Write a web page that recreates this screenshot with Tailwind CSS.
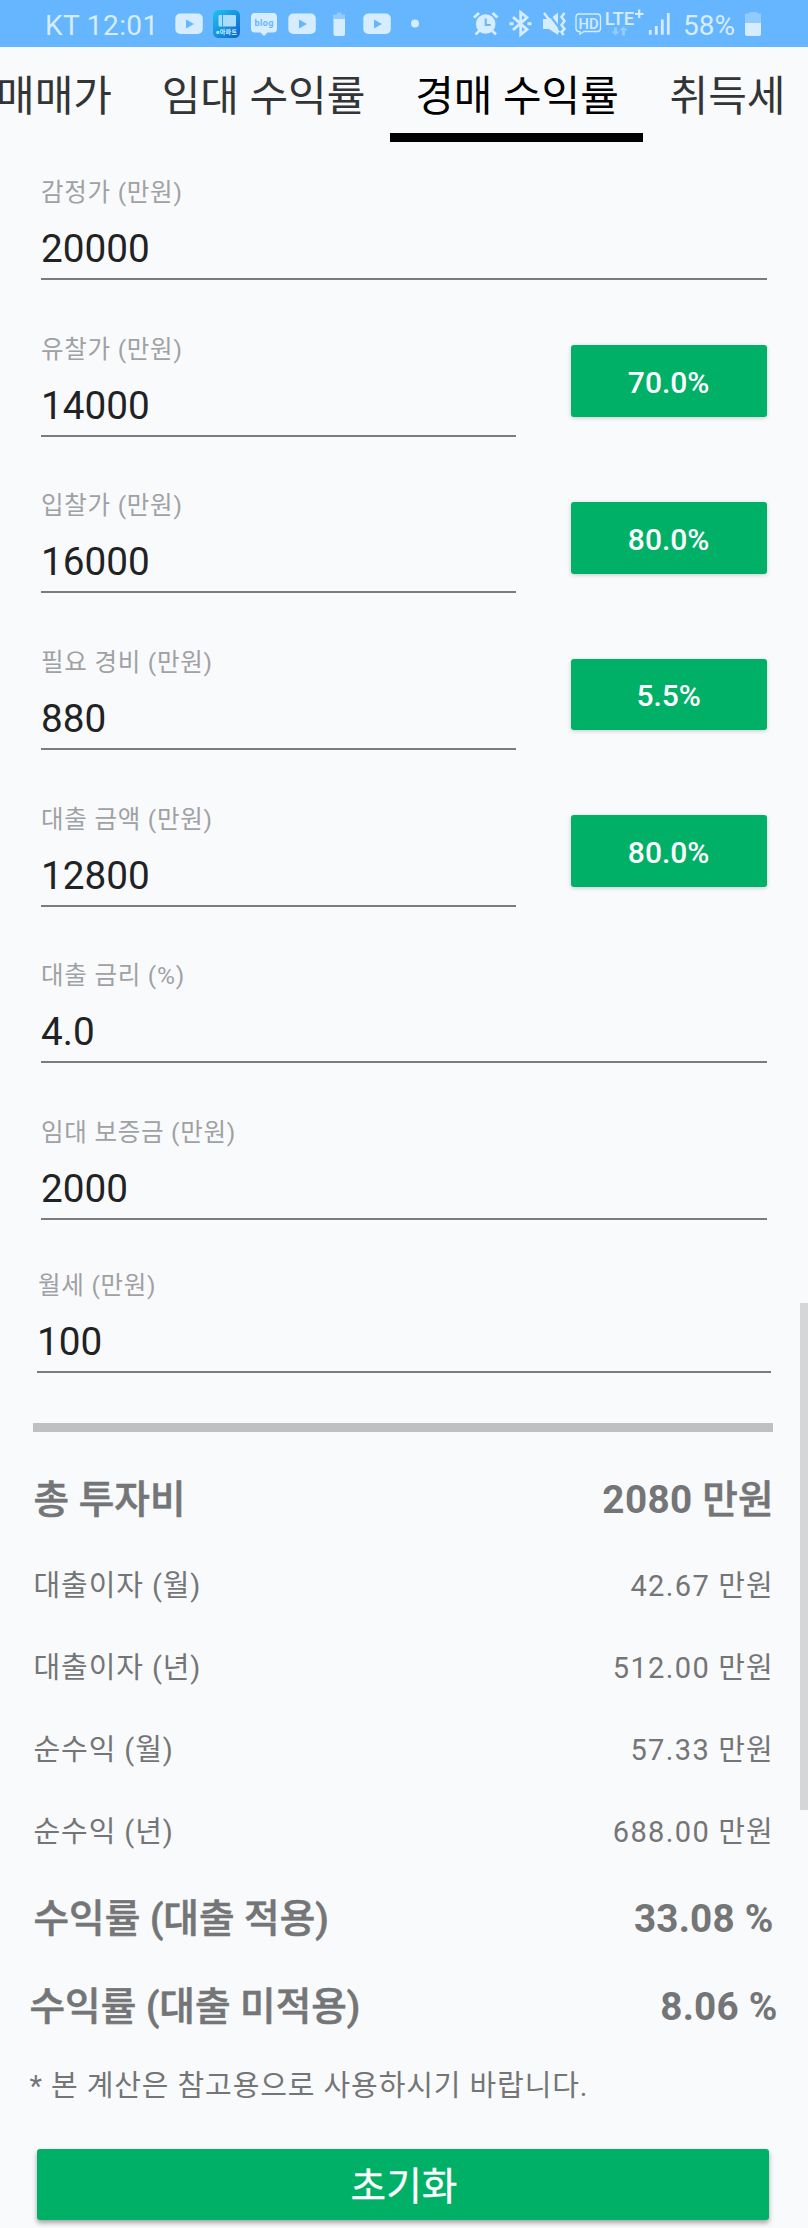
<!DOCTYPE html>
<html lang="ko">
<head>
<meta charset="utf-8">
<title>경매 수익률</title>
<script src="https://cdn.jsdelivr.net/npm/@tailwindcss/browser@4"></script>
</head>
<body class="w-[808px] h-[2228px] overflow-hidden bg-[#f9fafc] font-['Roboto','Noto_Sans_CJK_KR',sans-serif] whitespace-nowrap">
<div class="relative w-[808px] h-[2228px] overflow-hidden">

<!-- status bar -->
<header class="h-[47px] bg-[#66b6ff] flex text-[#d6ecff] text-[28px] leading-[51px]">
  <div class="w-[175px] pl-[45px] shrink-0 tracking-[0.400px]">KT 12:01</div>
  <svg class="w-[28px] h-[47px] shrink-0" viewBox="175 0 28 47"><rect x="175.300" y="13.500" width="27.500" height="20.500" rx="5" fill="#d6ecff"/><path d="M186 19.500L194 24L186 28.500Z" fill="#66b6ff"/></svg>
  <svg class="ml-[10px] w-[27px] h-[47px] shrink-0" viewBox="213 0 27 47"><defs><linearGradient id="g" x1="0" y1="0" x2="1" y2="1"><stop offset="0" stop-color="#22c3f0"/><stop offset="1" stop-color="#0a62d0"/></linearGradient></defs><rect x="213" y="10" width="27" height="28" rx="5.500" fill="url(#g)"/><rect x="218.500" y="15" width="17.500" height="11.500" rx="1" fill="#a9ddfa"/><path d="M222.500 15v11.500" stroke="#2ba4e8"/><text x="216" y="33.500" font-size="6" font-weight="700" fill="#d8f2ff" textLength="21">e아파트</text></svg>
  <svg class="ml-[11px] w-[27px] h-[47px] shrink-0" viewBox="251 0 27 47"><path d="M255 13h18a4 4 0 0 1 4 4v11.500a4 4 0 0 1-4 4h-5.500l-3.500 3.500l-3.500-3.500H255a4 4 0 0 1-4-4V17a4 4 0 0 1 4-4Z" fill="#d6ecff"/><text x="254.500" y="26" font-size="9" font-weight="700" fill="#66b6ff" textLength="19">blog</text></svg>
  <svg class="ml-[10px] w-[28px] h-[47px] shrink-0" viewBox="175 0 28 47"><rect x="175.300" y="13.500" width="27.500" height="20.500" rx="5" fill="#d6ecff"/><path d="M186 19.500L194 24L186 28.500Z" fill="#66b6ff"/></svg>
  <svg class="ml-[17px] w-[13px] h-[47px] shrink-0" viewBox="333 0 13 47"><path d="M337 12.500h4.500v2h3.500v5h-12v-5h4Z" fill="#92cbff"/><path d="M333.500 19h11.500v15q0 2-2 2h-7.500q-2 0-2-2Z" fill="#d6ecff"/></svg>
  <svg class="ml-[17px] w-[28px] h-[47px] shrink-0" viewBox="175 0 28 47"><rect x="175.300" y="13.500" width="27.500" height="20.500" rx="5" fill="#d6ecff"/><path d="M186 19.500L194 24L186 28.500Z" fill="#66b6ff"/></svg>
  <svg class="ml-[19px] w-[10px] h-[47px] shrink-0" viewBox="409 0 10 47"><circle cx="414" cy="23.500" r="4" fill="#d6ecff"/></svg>

  <!-- alarm -->
  <svg class="ml-[52px] w-[27px] h-[47px] shrink-0" viewBox="471 0 27 47" fill="none" stroke="#d6ecff"><circle cx="484.700" cy="24" r="9.800" fill="#d6ecff" stroke="none"/><path d="M484.700 18.500V25h5" stroke="#66b6ff" stroke-width="2"/><path d="M473 17.500L478 13M496.500 17.500L491.500 13" stroke-width="3"/><path d="M478.500 30.500L474.500 34.500M491 30.500L495 34.500" stroke-width="2.500"/></svg>
  <!-- bluetooth -->
  <svg class="ml-[10px] w-[24px] h-[47px] shrink-0" viewBox="508 0 24 47" fill="none" stroke="#d6ecff" stroke-width="2.800"><path d="M512 17L526 29.500L519.700 34.500V12.500L526 17.500L512 30"/><path d="M508.500 23.700h4M526.500 23.700h4" stroke-width="3"/></svg>
  <!-- muted with vibration -->
  <svg class="ml-[9px] w-[25px] h-[47px] shrink-0" viewBox="541 0 25 47"><path d="M542 19h6l1.500-1L557 28v7L548 29H542Z" fill="#d6ecff"/><path d="M557 12.500v12L551.500 17Z" fill="#d6ecff"/><path d="M543 13L558 32.500" stroke="#d6ecff" stroke-width="2.500"/><path d="M563.500 13l-3 4l3 4l-3 4l3 4l-3 3l2 3" stroke="#d6ecff" stroke-width="2.500" fill="none"/></svg>
  <!-- HD voice -->
  <svg class="ml-[8px] w-[27px] h-[47px] shrink-0" viewBox="574 0 27 47"><path d="M578 14h18.500q3 0 3 3v11.500q0 3-3 3H583l-4 2.500v-2.500h-1q-3 0-3-3V17q0-3 3-3Z" fill="none" stroke="#d6ecff" stroke-width="1.300"/><text x="577.500" y="28.500" font-size="15.500" font-weight="500" fill="#d6ecff" textLength="20" lengthAdjust="spacingAndGlyphs">HD</text></svg>
  <!-- LTE+ -->
  <svg class="ml-[2px] w-[41px] h-[47px] shrink-0" viewBox="603 0 41 47"><g fill="none" stroke="#d6ecff" stroke-width="2.200"><path d="M634 14h8.500M638.200 9.500v8.500"/></g><text x="603.800" y="25" font-size="17.500" font-weight="500" fill="#d6ecff" textLength="29.500" lengthAdjust="spacingAndGlyphs">LTE</text><path d="M613 27.500h3v4h2.500l-4 4l-4-4h2.500ZM621 35.500h3v-5h2.500l-4-4l-4 4h2.500Z" fill="#94ccff"/></svg>
  <!-- signal -->
  <svg class="ml-[3px] w-[24px] h-[47px] shrink-0" viewBox="647 0 24 47" stroke="#d6ecff" stroke-width="2.800"><path d="M649.300 30v4.700M655.300 26v8.700M661.300 19.500v15.200M667.300 13v21.700"/></svg>
  <div class="ml-[11px] w-[54px] shrink-0">58%</div>
  <svg class="ml-[8px] w-[17px] h-[47px] shrink-0" viewBox="744 0 17 47"><path d="M748.500 12h7.500v1.500h4V23h-16v-9.500h4.500Z" fill="#92cbff"/><path d="M744 23h16v11q0 2-2 2h-12q-2 0-2-2Z" fill="#d6ecff"/></svg>
</header>

<!-- tabs -->
<nav class="h-[95px] flex text-[42px] leading-[100px] text-[#333436]">
  <div class="w-[137px] shrink-0"><span class="-ml-[4px]">매매가</span></div>
  <div class="w-[253px] text-center shrink-0">임대 수익률</div>
  <div class="w-[253px] pl-[1px] text-center shrink-0 text-black border-b-[9px] border-black">경매 수익률</div>
  <div class="w-[165px] pl-[4px] text-center shrink-0">취득세</div>
</nav>

<main>
  <section class="px-[41px] text-[#212224]">
    <div class="h-[138px] flex flex-col justify-end border-b-2 border-[#7b7c7e]">
      <div class="h-[32px] leading-[32px] text-[24.500px] tracking-[0.750px] text-[#a0a1a3]">감정가 (만원)</div>
      <div class="mt-[17px] mb-[6px] h-[46px] leading-[46px] text-[38.700px]">20000</div>
    </div>
    <div class="h-[156.700px] flex justify-between">
      <div class="w-[475px] flex flex-col justify-end border-b-2 border-[#7b7c7e]">
        <div class="h-[32px] leading-[32px] text-[24.500px] tracking-[0.750px] text-[#a0a1a3]">유찰가 (만원)</div>
        <div class="mt-[17px] mb-[6px] h-[46px] leading-[46px] text-[38.700px]">14000</div>
      </div>
      <button class="mt-[65.200px] w-[195.700px] h-[71.700px] pt-[3px] pr-[1px] rounded-[3px] bg-[#00b067] text-white text-[30px] font-medium shadow-[0_1px_4px_rgba(0,0,0,0.200)]">70.0%</button>
    </div>
    <div class="h-[156.700px] flex justify-between">
      <div class="w-[475px] flex flex-col justify-end border-b-2 border-[#7b7c7e]">
        <div class="h-[32px] leading-[32px] text-[24.500px] tracking-[0.750px] text-[#a0a1a3]">입찰가 (만원)</div>
        <div class="mt-[17px] mb-[6px] h-[46px] leading-[46px] text-[38.700px]">16000</div>
      </div>
      <button class="mt-[65.200px] w-[195.700px] h-[71.700px] pt-[3px] pr-[1px] rounded-[3px] bg-[#00b067] text-white text-[30px] font-medium shadow-[0_1px_4px_rgba(0,0,0,0.200)]">80.0%</button>
    </div>
    <div class="h-[156.700px] flex justify-between">
      <div class="w-[475px] flex flex-col justify-end border-b-2 border-[#7b7c7e]">
        <div class="h-[32px] leading-[32px] text-[24.500px] tracking-[0.750px] text-[#a0a1a3]">필요 경비 (만원)</div>
        <div class="mt-[17px] mb-[6px] h-[46px] leading-[46px] text-[38.700px]">880</div>
      </div>
      <button class="mt-[65.200px] w-[195.700px] h-[71.700px] pt-[3px] pr-[1px] rounded-[3px] bg-[#00b067] text-white text-[30px] font-medium shadow-[0_1px_4px_rgba(0,0,0,0.200)]">5.5%</button>
    </div>
    <div class="h-[156.700px] flex justify-between">
      <div class="w-[475px] flex flex-col justify-end border-b-2 border-[#7b7c7e]">
        <div class="h-[32px] leading-[32px] text-[24.500px] tracking-[0.750px] text-[#a0a1a3]">대출 금액 (만원)</div>
        <div class="mt-[17px] mb-[6px] h-[46px] leading-[46px] text-[38.700px]">12800</div>
      </div>
      <button class="mt-[65.200px] w-[195.700px] h-[71.700px] pt-[3px] pr-[1px] rounded-[3px] bg-[#00b067] text-white text-[30px] font-medium shadow-[0_1px_4px_rgba(0,0,0,0.200)]">80.0%</button>
    </div>
    <div class="h-[156.700px] flex flex-col justify-end border-b-2 border-[#7b7c7e]">
      <div class="h-[32px] leading-[32px] text-[24.500px] tracking-[0.750px] text-[#a0a1a3]">대출 금리 (%)</div>
      <div class="mt-[17px] mb-[6px] h-[46px] leading-[46px] text-[38.700px]">4.0</div>
    </div>
    <div class="h-[156.700px] flex flex-col justify-end border-b-2 border-[#7b7c7e]">
      <div class="h-[32px] leading-[32px] text-[24.500px] tracking-[0.750px] text-[#a0a1a3]">임대 보증금 (만원)</div>
      <div class="mt-[17px] mb-[6px] h-[46px] leading-[46px] text-[38.700px]">2000</div>
    </div>
    <div class="-mx-[4px] h-[152.700px] flex flex-col justify-end border-b-2 border-[#7b7c7e]">
      <div class="h-[32px] leading-[32px] pl-[1px] text-[24.500px] tracking-[0.750px] text-[#a0a1a3]">월세 (만원)</div>
      <div class="mt-[17px] mb-[6px] h-[46px] leading-[46px] text-[38.700px]">100</div>
    </div>
  </section>

  <div class="ml-[33px] mr-[35px] mt-[50.400px] h-[8.700px] bg-[#bfc0c2]"></div>

  <section class="pl-[33.500px] pr-[34.500px] pt-[40px] text-[#747577]">
    <div class="h-[55px] leading-[55px] flex justify-between text-[38.700px]"><span class="font-medium [-webkit-text-stroke:0.600px]">총 투자비</span><span class="font-medium"><b class="font-bold tracking-[0.400px]">2080</b><span class="[-webkit-text-stroke:0.600px]"> 만원</span></span></div>
    <div class="mt-[19.400px] h-[81.800px] leading-[81.800px] flex justify-between text-[29px] tracking-[0.900px]"><span>대출이자 (월)</span><span><span class="tracking-[1.400px]">42.67</span> 만원</span></div>
    <div class="h-[81.800px] leading-[81.800px] flex justify-between text-[29px] tracking-[0.900px]"><span>대출이자 (년)</span><span><span class="tracking-[1.400px]">512.00</span> 만원</span></div>
    <div class="h-[81.800px] leading-[81.800px] flex justify-between text-[29px] tracking-[0.900px]"><span>순수익 (월)</span><span><span class="tracking-[1.400px]">57.33</span> 만원</span></div>
    <div class="h-[81.800px] leading-[81.800px] flex justify-between text-[29px] tracking-[0.900px]"><span>순수익 (년)</span><span><span class="tracking-[1.400px]">688.00</span> 만원</span></div>
    <div class="mt-[1.200px] h-[88.300px] leading-[88.300px] flex justify-between text-[38.700px]"><span class="font-medium [-webkit-text-stroke:0.600px]">수익률 (대출 적용)</span><span class="font-bold tracking-[0.200px]">33.08 %</span></div>
    <div class="-mx-[4px] h-[88.300px] leading-[88.300px] flex justify-between text-[38.700px]"><span class="font-medium [-webkit-text-stroke:0.600px]">수익률 (대출 미적용)</span><span class="font-bold tracking-[0.200px]">8.06 %</span></div>
    <p class="-mx-[4px] h-[71.400px] leading-[71.400px] text-[29px] tracking-[0.900px]">* 본 계산은 참고용으로 사용하시기 바랍니다.</p>
  </section>

  <button class="block mx-[37px] mt-[25.900px] w-[732px] h-[71.500px] pt-[4px] pl-[2px] rounded-[3px] bg-[#00b067] text-white text-[38.700px] leading-[68px] shadow-[0_3px_5px_rgba(0,0,0,0.350)] [-webkit-text-stroke:0.300px]">초기화</button>
</main>

<!-- scrollbar thumb over the content -->
<div class="absolute right-0 top-[1303px] w-[8px] h-[507px] bg-[#d5d6d8]"></div>
</div>
</body>
</html>
